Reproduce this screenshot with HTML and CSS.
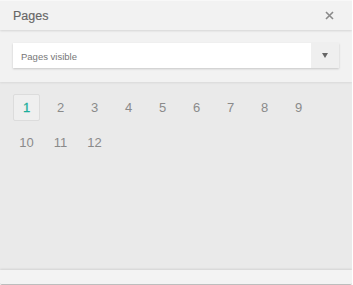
FILE: index.html
```html
<!DOCTYPE html>
<html>
<head>
<meta charset="utf-8">
<link rel="stylesheet" href="styles.css">
</head>
<body>
<div class="panel">
  <div class="header">
    <span class="title">Pages</span>
    <svg class="close" width="9" height="9" viewBox="0 0 9 9"><path d="M1 1L8 8M8 1L1 8" stroke="#8a8a8a" stroke-width="1.6" fill="none"/></svg>
  </div>
  <div class="filter">
    <div class="select">
      <span class="select-text">Pages visible</span>
      <span class="select-btn"><span class="caret"></span></span>
    </div>
  </div>
  <div class="content">
    <div class="pages">
      <span class="page active">1</span>
      <span class="page">2</span>
      <span class="page">3</span>
      <span class="page">4</span>
      <span class="page">5</span>
      <span class="page">6</span>
      <span class="page">7</span>
      <span class="page">8</span>
      <span class="page">9</span>
      <span class="page">10</span>
      <span class="page">11</span>
      <span class="page">12</span>
    </div>
  </div>
  <div class="footer"></div>
</div>
</body>
</html>
```
FILE: styles.css
```css
html, body {
  margin: 0;
  padding: 0;
  background: #ffffff;
}
body {
  font-family: "Liberation Sans", Arial, sans-serif;
}
.panel {
  width: 352px;
  height: 284px;
  display: flex;
  flex-direction: column;
  background: #eaeaea;
  border-bottom: 1px solid #bdbdbd;
  border-radius: 0 0 2px 2px;
  overflow: hidden;
}
.header {
  height: 30px;
  flex: none;
  box-sizing: border-box;
  border-top: 1px solid #f8f8f8;
  background: #f2f2f2;
  display: flex;
  align-items: center;
  justify-content: space-between;
  padding: 0 18px 0 13px;
  position: relative;
  z-index: 2;
  box-shadow: 0 1px 2px rgba(0,0,0,0.12);
}
.title {
  font-size: 12.5px;
  color: #666;
  margin-top: 1px;
  -webkit-text-stroke: 0.15px #666;
}
.close {
  display: block;
}
.filter {
  flex: none;
  height: 52px;
  box-sizing: border-box;
  background: #f2f2f2;
  padding: 13px 13px 0 13px;
  position: relative;
  z-index: 1;
  box-shadow: 0 1px 2px rgba(0,0,0,0.08);
}
.select {
  height: 25px;
  background: #fff;
  display: flex;
  align-items: center;
  box-shadow: 0 1px 2px rgba(0,0,0,0.18);
}
.select-text {
  flex: 1;
  padding-left: 8px;
  padding-top: 1px;
  font-size: 9.5px;
  color: #777;
}
.select-btn {
  width: 28px;
  height: 100%;
  background: #efefef;
  display: flex;
  align-items: center;
  justify-content: center;
}
.caret {
  width: 0;
  height: 0;
  border-left: 3.5px solid transparent;
  border-right: 3.5px solid transparent;
  border-top: 5px solid #666;
  margin-bottom: 1px;
}
.content {
  flex: 1;
  padding: 12px 13px 0 13px;
}
.pages {
  display: grid;
  grid-template-columns: repeat(9, 27px);
  column-gap: 7px;
  row-gap: 8px;
}
.page {
  height: 27px;
  box-sizing: border-box;
  display: flex;
  align-items: center;
  justify-content: center;
  font-size: 13px;
  color: #8a8a8a;
  border: 1px solid transparent;
  border-radius: 2px;
}
.page.active {
  color: #1aae9c;
  background: #efefef;
  border-color: #dcdcdc;
  -webkit-text-stroke: 0.3px #1aae9c;
}
.footer {
  flex: none;
  height: 14px;
  background: #f3f3f3;
  box-shadow: 0 -1px 2px rgba(0,0,0,0.1);
}
```
